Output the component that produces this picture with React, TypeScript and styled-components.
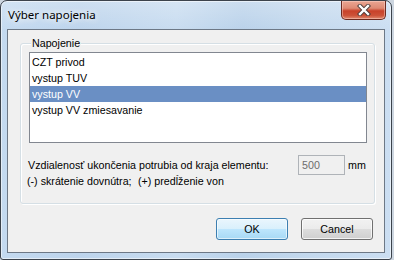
import React from "react";
import styled, { createGlobalStyle, css } from "styled-components";

const GlobalStyle = createGlobalStyle`
  html, body {
    margin: 0;
    padding: 0;
    background: #cdd6e0;
  }
  body {
    width: 394px;
    height: 260px;
    overflow: hidden;
    font-family: "Liberation Sans", Arial, sans-serif;
  }
`;

const FONT_SIZE = "10.7px";

const Window = styled.div`
  width: 392px;
  height: 260px;
  box-sizing: border-box;
  border: 1px solid #3c434c;
  border-radius: 7px 7px 3px 3px;
  padding: 0 6px 6px 6px;
  display: flex;
  flex-direction: column;
  background:
    linear-gradient(180deg, rgba(255,255,255,0.25) 0%, rgba(255,255,255,0) 30px),
    linear-gradient(90deg, #c4daf0 0%, #bdd4ec 20%, #c8dcf0 45%, #bad2ea 62%, #c4d9ee 80%, #cbdef2 100%);
  box-shadow: inset 0 0 0 1px rgba(255, 255, 255, 0.55);
`;

const TitleBar = styled.div`
  height: 28px;
  display: flex;
  justify-content: space-between;
  align-items: flex-start;
`;

const Title = styled.div`
  margin: 6px 0 0 1px;
  font-family: "Noto Sans", "Open Sans", sans-serif;
  font-size: 11.5px;
  line-height: 16px;
  color: #000;
  text-shadow: 0 0 6px rgba(255, 255, 255, 0.95), 0 0 10px rgba(255, 255, 255, 0.8);
`;

const CloseButton = styled.div`
  width: 45px;
  height: 19px;
  margin-right: -1px;
  box-sizing: border-box;
  border: 1px solid #6b2a20;
  border-top: none;
  border-radius: 0 0 5px 5px;
  display: flex;
  align-items: center;
  justify-content: center;
  background: linear-gradient(180deg, #eaa693 0%, #de8a74 40%, #c8422a 55%, #cc5238 80%, #e08a70 100%);
  box-shadow: inset 0 0 0 1px rgba(255, 220, 210, 0.45);
`;

const Client = styled.div`
  flex: 1;
  box-sizing: border-box;
  border: 1px solid #6d7886;
  background: #f0f0f0;
  padding: 13px 9px 12px 12px;
  display: flex;
  flex-direction: column;
`;

const GroupBox = styled.div`
  position: relative;
  height: 161px;
  box-sizing: border-box;
  border: 1px solid #d5dfe5;
  border-radius: 3px;
  box-shadow: inset 1px 1px 0 #fff, 1px 1px 0 #fff;
  padding: 8px 7px 14px 6px;
  display: flex;
  flex-direction: column;
`;

const GroupLabel = styled.span`
  position: absolute;
  top: -8px;
  left: 10px;
  padding: 0 1px;
  background: #f0f0f0;
  font-size: ${FONT_SIZE};
  line-height: 14px;
  color: #000;
`;

const ListBox = styled.div`
  margin-left: 2px;
  height: 91px;
  box-sizing: border-box;
  border: 1px solid #828790;
  background: #fff;
  padding-top: 1px;
  overflow: hidden;
`;

const ListItem = styled.div<{ $selected?: boolean }>`
  height: 16px;
  line-height: 16px;
  padding-left: 2px;
  font-size: ${FONT_SIZE};
  color: #000;
  white-space: nowrap;
  ${(p) =>
    p.$selected &&
    css`
      background: #6a8fc4;
      color: #fff;
    `}
`;

const DistanceRow = styled.div`
  margin-top: 12px;
  height: 20px;
  display: flex;
  align-items: center;
  font-size: ${FONT_SIZE};
  line-height: 16px;
  color: #000;
`;

const DistanceLabel = styled.span`
  width: 271px;
  padding-left: 1px;
  box-sizing: border-box;
  white-space: nowrap;
`;

const NumberInput = styled.input`
  width: 47px;
  height: 20px;
  box-sizing: border-box;
  margin: 0;
  border: 1px solid #afb3b8;
  background: #f0f0f0;
  padding: 0 3px;
  font-family: "Liberation Sans", Arial, sans-serif;
  font-size: ${FONT_SIZE};
  color: #6d6d6d;
  -webkit-text-fill-color: #6d6d6d;
  opacity: 1;
  outline: none;
`;

const Unit = styled.span`
  margin-left: 3px;
`;

const Hint = styled.div`
  margin-top: -2px;
  font-size: ${FONT_SIZE};
  line-height: 16px;
  color: #000;
  white-space: nowrap;
`;

const HintPart = styled.span<{ $width?: number }>`
  display: inline-block;
  ${(p) => p.$width !== undefined && css`width: ${p.$width}px;`}
`;

const ButtonRow = styled.div`
  margin-top: 14px;
  padding-right: 2px;
  display: flex;
  justify-content: flex-end;
  gap: 13px;
`;

const Button = styled.button<{ $default?: boolean }>`
  width: 72px;
  height: 22px;
  box-sizing: border-box;
  margin: 0;
  padding: 0;
  border-radius: 3px;
  font-family: "Liberation Sans", Arial, sans-serif;
  font-size: ${FONT_SIZE};
  color: #000;
  border: 1px solid #707070;
  background: linear-gradient(180deg, #f2f2f2 0%, #ebebeb 50%, #dddddd 50%, #cfcfcf 100%);
  box-shadow: inset 0 0 0 1px rgba(255, 255, 255, 0.75);
  ${(p) =>
    p.$default &&
    css`
      border-color: #3c7fb1;
      background: linear-gradient(180deg, #eaf6fd 0%, #d9f0fc 50%, #bee6fd 50%, #a7d9f5 100%);
      box-shadow: inset 0 0 0 1px rgba(255, 255, 255, 0.6);
    `}
`;

const items = ["CZT privod", "vystup TUV", "vystup VV", "vystup VV zmiesavanie"];

export default function App() {
  return (
    <>
      <GlobalStyle />
      <Window>
        <TitleBar>
          <Title>Výber napojenia</Title>
          <CloseButton>
            <svg width="14" height="12" viewBox="0 0 14 12">
              <path d="M3 2 L11 10 M11 2 L3 10" stroke="#4a3a38" strokeWidth="4.2" strokeLinecap="square" />
              <path d="M3 2 L11 10 M11 2 L3 10" stroke="#ffffff" strokeWidth="2.4" strokeLinecap="square" />
            </svg>
          </CloseButton>
        </TitleBar>
        <Client>
          <GroupBox>
            <GroupLabel>Napojenie</GroupLabel>
            <ListBox>
              {items.map((it, i) => (
                <ListItem key={it} $selected={i === 2}>
                  {it}
                </ListItem>
              ))}
            </ListBox>
            <DistanceRow>
              <DistanceLabel>Vzdialenosť ukončenia potrubia od kraja elementu:</DistanceLabel>
              <NumberInput disabled readOnly value="500" />
              <Unit>mm</Unit>
            </DistanceRow>
            <Hint>
              <HintPart $width={111}>(-) skrátenie dovnútra;</HintPart>
              <HintPart>(+) predĺženie von</HintPart>
            </Hint>
          </GroupBox>
          <ButtonRow>
            <Button $default>OK</Button>
            <Button>Cancel</Button>
          </ButtonRow>
        </Client>
      </Window>
    </>
  );
}
